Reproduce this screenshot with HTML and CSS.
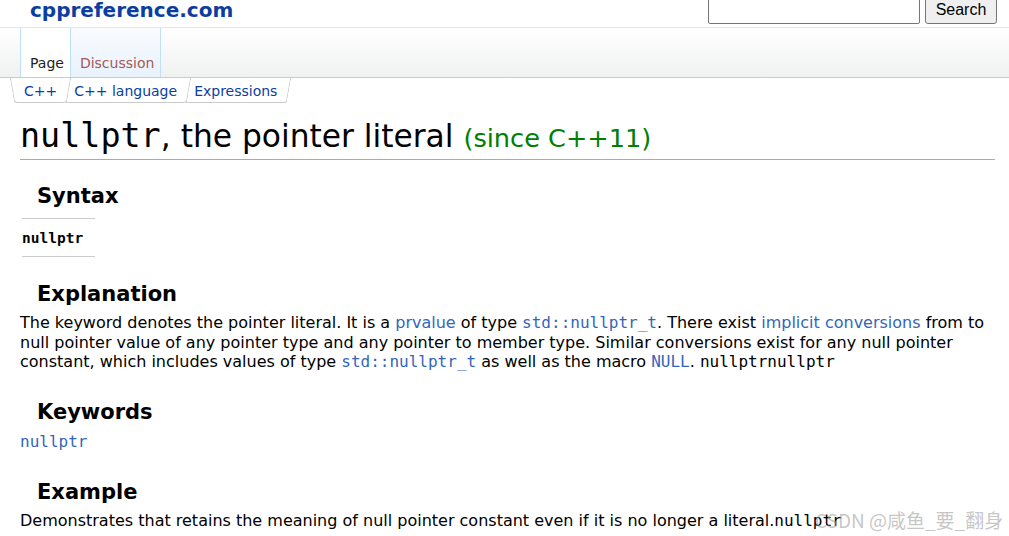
FILE: index.html
```html
<!DOCTYPE html>
<html lang="en">
<head>
    <meta charset="UTF-8">
    <title>nullptr, the pointer literal - cppreference.com</title>
    <link rel="stylesheet" href="styles.css">
</head>
<body>
    <div id="cpp-head">
        <div class="head-top">
            <a class="logo" href="#">cppreference.com</a>
            <form class="search">
                <input type="text" class="search-box">
                <button type="button" class="search-btn">Search</button>
            </form>
        </div>
        <div class="head-tabs">
            <a class="tab tab-selected" href="#">Page</a>
            <a class="tab tab-new" href="#">Discussion</a>
        </div>
    </div>

    <div id="content">
        <div class="navbar">
            <a class="crumb" href="#">C++</a>
            <a class="crumb" href="#">C++ language</a>
            <a class="crumb" href="#">Expressions</a>
        </div>

        <h1 class="title"><span class="mono">nullptr</span>, the pointer literal <span class="since">(since C++11)</span></h1>

        <h3>Syntax</h3>
        <div class="syntax"><b>nullptr</b></div>

        <h3>Explanation</h3>
        <p>The keyword denotes the pointer literal. It is a <a href="#">prvalue</a> of type <a class="mono" href="#">std::nullptr_t</a>. There exist <a href="#">implicit conversions</a> from to null pointer value of any pointer type and any pointer to member type. Similar conversions exist for any null pointer constant, which includes values of type <a class="mono" href="#">std::nullptr_t</a> as well as the macro <a class="mono" href="#">NULL</a>. <span class="mono">nullptrnullptr</span></p>

        <h3>Keywords</h3>
        <p class="kw"><a class="mono" href="#">nullptr</a></p>

        <h3>Example</h3>
        <p>Demonstrates that retains the meaning of null pointer constant even if it is no longer a literal.<span class="mono">nullptr</span></p>
    </div>

    <div class="watermark">CSDN @咸鱼_要_翻身</div>
</body>
</html>
```

FILE: styles.css
```css
body {
    font-family: "DejaVu Sans", sans-serif;
    color: #000000;
    background-color: #ffffff;
    margin: 0;
    padding: 0;
    overflow: hidden;
}
a {
    text-decoration: none;
    color: #3366bb;
}
.mono {
    font-family: "DejaVu Sans Mono", monospace;
}
#cpp-head {
    margin-top: -8px;
}
.head-top {
    height: 35px;
    display: flex;
    align-items: flex-start;
    justify-content: space-between;
    border-bottom: 1px solid #e6e6e6;
}
.logo {
    font-size: 20px;
    font-weight: bold;
    color: #0b3ea0;
    margin-left: 30px;
    line-height: 26px;
    padding-top: 5px;
}
.search {
    display: flex;
    gap: 5px;
    margin-right: 12px;
}
.search-box {
    width: 212px;
    height: 28px;
    margin: 4px 0 0 0;
    border: 1px solid #767676;
    border-radius: 2px;
    box-sizing: border-box;
}
.search-btn {
    font-family: "Liberation Sans", Arial, sans-serif;
    font-size: 16px;
    height: 28px;
    width: 72px;
    margin-top: 4px;
    border: 1px solid #767676;
    border-radius: 3px;
    background-color: #efefef;
    color: #000000;
}
.head-tabs {
    height: 49px;
    display: flex;
    align-items: stretch;
    padding-left: 20px;
    background: linear-gradient(#ffffff, #f0f1f1);
    border-bottom: 1px solid #c8ccd1;
}
.tab {
    font-size: 14px;
    display: flex;
    align-items: flex-end;
    padding: 0 6px 6px 9px;
    border-right: 1px solid #bfe0f8;
}
.tab-selected {
    color: #222222;
    background-color: #ffffff;
    border-left: 1px solid #bfe0f8;
}
.tab-new {
    color: #a55858;
    background: linear-gradient(#f9fbff, #e8f2fb);
}
#content {
    padding: 0 14px 0 20px;
}
.navbar {
    display: flex;
    height: 25px;
    margin-left: 2px;
}
.crumb {
    position: relative;
    font-size: 14px;
    color: #0b3ea0;
    padding: 5px 12px 0 2px;
    margin-right: 3px;
}
.crumb::after {
    content: "";
    position: absolute;
    top: 0;
    bottom: 0;
    left: -4px;
    right: 0;
    border-right: 1px solid #cccccc;
    border-bottom: 1px solid #cccccc;
    border-bottom-right-radius: 3px;
    transform: skewX(-10deg);
}
.crumb:first-child::before {
    content: "";
    position: absolute;
    top: 0;
    bottom: 0;
    left: -10px;
    width: 12px;
    border-left: 1px solid #cccccc;
    border-bottom: 1px solid #cccccc;
    border-bottom-left-radius: 3px;
    transform: skewX(10deg);
}
.title {
    font-size: 31.3px;
    font-weight: normal;
    margin: 12px 0 0 0;
    padding-bottom: 0;
    border-bottom: 1px solid #aaaaaa;
    line-height: 41px;
}
.title .mono {
    font-size: 33.4px;
}
.since {
    font-size: 25.6px;
    color: #008000;
}
h3 {
    font-size: 21px;
    font-weight: bold;
    margin: 23px 0 0 17px;
    line-height: 26px;
}
.syntax {
    font-family: "DejaVu Sans Mono", monospace;
    font-size: 14.5px;
    width: 73px;
    margin: 9px 0 0 2px;
    padding: 11px 0 10px 0;
    border-top: 1px solid #cccccc;
    border-bottom: 1px solid #cccccc;
}
p {
    font-size: 16px;
    line-height: 19.5px;
    margin: 6px 0 0 0;
}
.kw {
    margin-top: 7px;
}
.syntax + h3 {
    margin-top: 24px;
}
p + h3 {
    margin-top: 27px;
}
.kw + h3 {
    margin-top: 28px;
}
.watermark {
    position: absolute;
    left: 815px;
    top: 506px;
    font-size: 19px;
    color: rgba(160, 160, 160, 0.6);
    font-family: "Noto Sans CJK SC", sans-serif;
}
```
